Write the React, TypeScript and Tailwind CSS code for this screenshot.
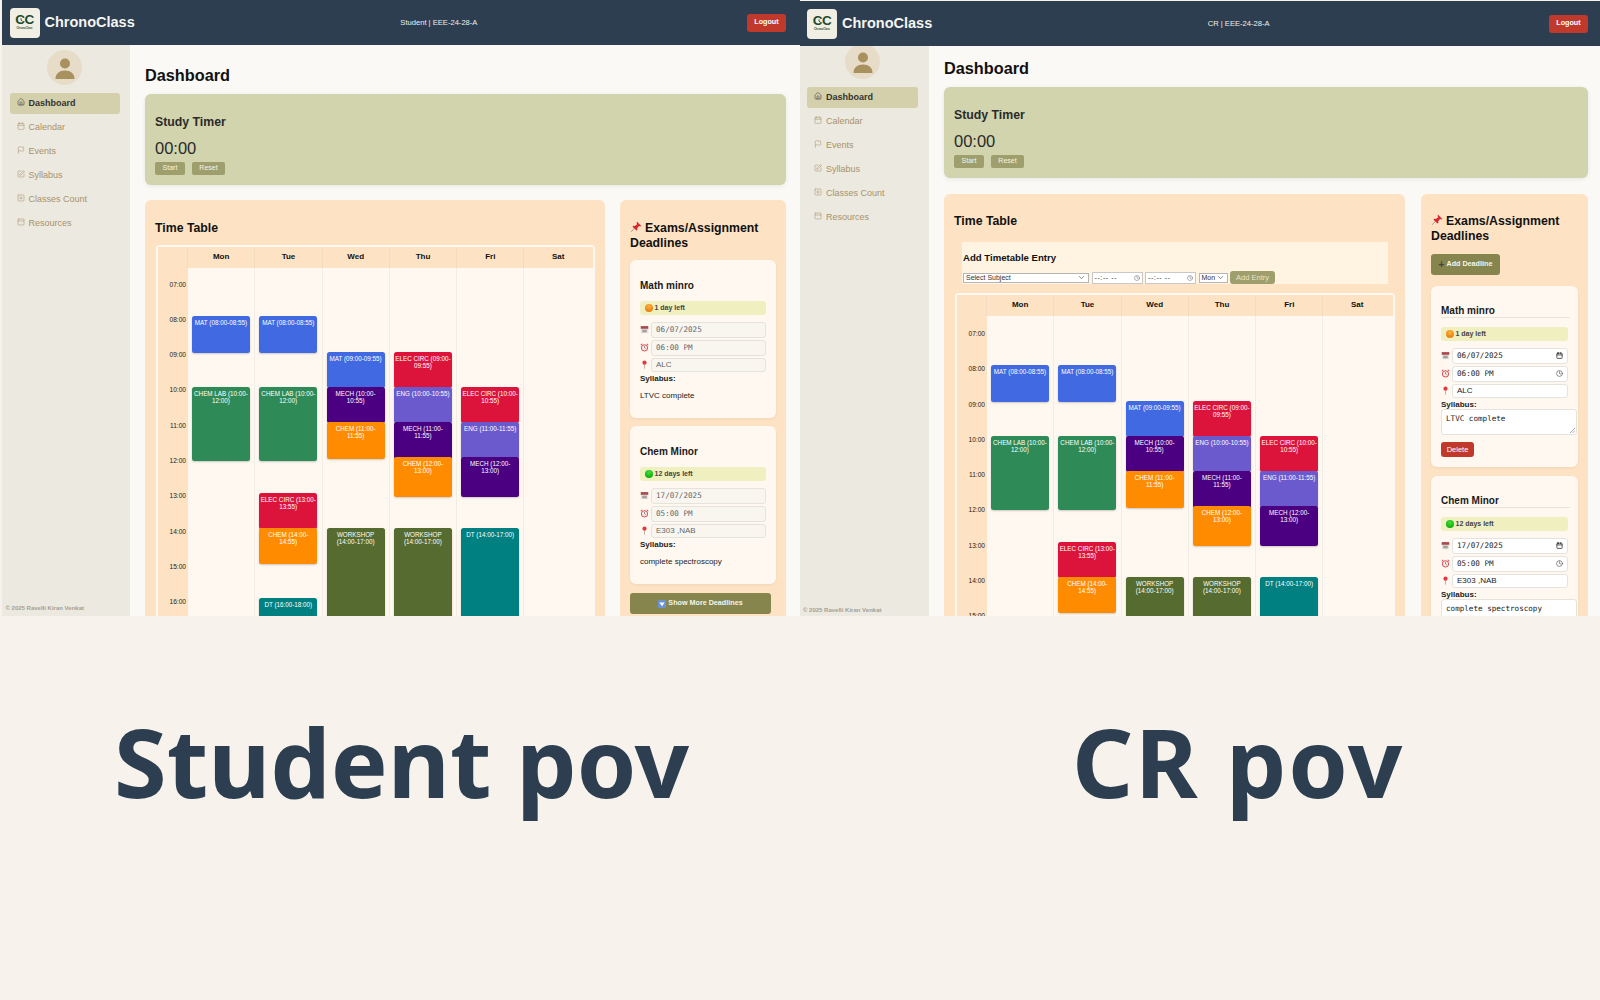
import React from "react";
import { Calendar, ChevronDown, Clock, Flag, Home, PanelTop, SquarePen, SquarePlus } from "lucide-react";

const hourH = 35.25;
const hours = ["07:00", "08:00", "09:00", "10:00", "11:00", "12:00", "13:00", "14:00", "15:00", "16:00", "17:00", "18:00"];

type Ev = { label: string; start: number; h: number; color: string };

const blue = "bg-[#4169e1]";
const green = "bg-[#2e8b57]";
const red = "bg-[#dc143c]";
const purple = "bg-[#4b0082]";
const slate = "bg-[#6a5acd]";
const orange = "bg-[#ff8c00]";
const olive = "bg-[#556b2f]";
const teal = "bg-[#008080]";

const days: { name: string; events: Ev[] }[] = [
  {
    name: "Mon",
    events: [
      { label: "MAT (08:00-08:55)", start: 8, h: 36.5, color: blue },
      { label: "CHEM LAB (10:00-12:00)", start: 10, h: 74.5, color: green },
    ],
  },
  {
    name: "Tue",
    events: [
      { label: "MAT (08:00-08:55)", start: 8, h: 36.5, color: blue },
      { label: "CHEM LAB (10:00-12:00)", start: 10, h: 74.5, color: green },
      { label: "ELEC CIRC (13:00-13:55)", start: 13, h: 36.5, color: red },
      { label: "CHEM (14:00-14:55)", start: 14, h: 36.5, color: orange },
      { label: "DT (16:00-18:00)", start: 16, h: 74.5, color: teal },
    ],
  },
  {
    name: "Wed",
    events: [
      { label: "MAT (09:00-09:55)", start: 9, h: 36.5, color: blue },
      { label: "MECH (10:00-10:55)", start: 10, h: 36.5, color: purple },
      { label: "CHEM (11:00-11:55)", start: 11, h: 36.5, color: orange },
      { label: "WORKSHOP (14:00-17:00)", start: 14, h: 110, color: olive },
    ],
  },
  {
    name: "Thu",
    events: [
      { label: "ELEC CIRC (09:00-09:55)", start: 9, h: 36.5, color: red },
      { label: "ENG (10:00-10:55)", start: 10, h: 36.5, color: slate },
      { label: "MECH (11:00-11:55)", start: 11, h: 36.5, color: purple },
      { label: "CHEM (12:00-13:00)", start: 12, h: 39.5, color: orange },
      { label: "WORKSHOP (14:00-17:00)", start: 14, h: 110, color: olive },
    ],
  },
  {
    name: "Fri",
    events: [
      { label: "ELEC CIRC (10:00-10:55)", start: 10, h: 36.5, color: red },
      { label: "ENG (11:00-11:55)", start: 11, h: 36.5, color: slate },
      { label: "MECH (12:00-13:00)", start: 12, h: 39.5, color: purple },
      { label: "DT (14:00-17:00)", start: 14, h: 110, color: teal },
    ],
  },
  { name: "Sat", events: [] },
];

const nav = [
  { label: "Dashboard", icon: Home },
  { label: "Calendar", icon: Calendar },
  { label: "Events", icon: Flag },
  { label: "Syllabus", icon: SquarePen },
  { label: "Classes Count", icon: SquarePlus },
  { label: "Resources", icon: PanelTop },
];

const deadlines = [
  { title: "Math minro", left: "1 day left", soon: true, date: "06/07/2025", time: "06:00 PM", place: "ALC", syllabus: "LTVC complete" },
  { title: "Chem Minor", left: "12 days left", soon: false, date: "17/07/2025", time: "05:00 PM", place: "E303 ,NAB", syllabus: "complete spectroscopy" },
];

const Logo = () => (
  <div className="relative flex h-[30px] w-[30px] shrink-0 flex-col items-center rounded-[4px] bg-[#f1eee3] pt-[6px]">
    <span className="text-[13.5px] leading-[12px] font-bold tracking-[-0.5px] text-[#1f4a2c]">CC</span>
    <span className="mt-[1px] text-[2.6px] leading-[3px] font-bold text-[#1f4a2c]">ChronoClass</span>
    <svg viewBox="0 0 10 10" className="absolute top-[9px] left-[8.5px] h-[6px] w-[6px]" fill="none" stroke="#1f4a2c" strokeWidth="1.4">
      <path d="M5 2v3.4l2.4 1.2" />
    </svg>
  </div>
);

const PinEmoji = () => (
  <svg viewBox="0 0 16 16" className="mr-[3px] inline-block h-[12px] w-[12px] align-[-1px]">
    <path d="M1.5 14.5 6 9.5" stroke="#9b9b9b" strokeWidth="1.2" />
    <path d="M9.5 1 15 6.5 13.6 7.4 12 6.6 9.6 9.8 9.8 12 8.6 12.8 3.4 7.6 4.2 6.4 6.4 6.6 9.6 4.2 8.7 2.3Z" fill="#d9252f" />
  </svg>
);

const CalendarEmoji = () => (
  <svg viewBox="0 0 12 12" className="h-[9px] w-[9px] shrink-0">
    <rect x="1" y="1.5" width="10" height="9.5" fill="#e6e2dc" />
    <rect x="1" y="1.5" width="10" height="3.5" fill="#a9474c" />
    <path d="M3 7h6M3 9h6" stroke="#6d6d6d" strokeWidth="1" />
  </svg>
);

const AlarmEmoji = () => (
  <svg viewBox="0 0 12 12" className="h-[9px] w-[9px] shrink-0" fill="none">
    <circle cx="6" cy="6.5" r="4.2" fill="#f9ece8" stroke="#d6454a" strokeWidth="1.3" />
    <path d="M1 3 3 1M11 3 9 1" stroke="#d6454a" strokeWidth="1.4" />
    <path d="M6 4v2.6l1.6.8" stroke="#555" strokeWidth=".8" />
  </svg>
);

const PlaceEmoji = () => (
  <svg viewBox="0 0 12 12" className="h-[9px] w-[9px] shrink-0">
    <path d="M6 6.5v5" stroke="#b9a79d" strokeWidth="1.2" />
    <circle cx="6" cy="3.6" r="2.8" fill="#e0383e" />
  </svg>
);

const Field = ({ icon, text, mono, h, cr, trail }: { icon: React.ReactNode; text: string; mono?: boolean; h: string; cr: boolean; trail?: React.ReactNode }) => (
  <div className="flex items-center">
    <div className="flex w-[11px] shrink-0 justify-start">{icon}</div>
    <div
      className={`flex flex-1 items-center justify-between rounded-[3px] border border-[#e6e3dc] pr-[4px] pl-[4px] ${h} ${
        cr ? "bg-white text-[#222]" : "bg-[#f9f6f0] text-[#666]"
      } ${mono ? "font-['DejaVu_Sans_Mono',monospace] text-[7.6px]" : "text-[8px]"}`}
    >
      <span>{text}</span>
      {trail}
    </div>
  </div>
);

const DeadlineCard = ({ d, cr }: { d: (typeof deadlines)[number]; cr: boolean }) => (
  <div className={`rounded-[6px] bg-[#fff8f1] pl-[10px] shadow-[0_1px_3px_rgba(0,0,0,0.06)] ${cr ? "pt-[19px] pr-[1px] pb-[10px]" : "pt-[20px] pr-[10px] pb-[18px]"}`}>
    <h4 className={`text-[10px] leading-[12px] font-bold text-[#1a1a1a] ${cr ? "mr-[7px] border-b border-[#e8e4dc]" : ""}`}>{d.title}</h4>
    <div className={`mt-[9px] flex h-[14px] items-center gap-[2px] rounded-[3px] bg-[#f0efc0] pl-[5px] text-[7px] font-bold text-[#444] ${cr ? "mr-[9px]" : ""}`}>
      <span
        className={`h-[7.5px] w-[7.5px] rounded-full ${
          d.soon ? "bg-[radial-gradient(circle_at_50%_30%,#ffb13d,#e06f00)]" : "bg-[radial-gradient(circle_at_50%_30%,#3fe03a,#009a00)]"
        }`}
      />
      {d.left}
    </div>
    <div className={`mt-[7px] flex flex-col gap-[2px] ${cr ? "mr-[9px]" : ""}`}>
      <Field icon={<CalendarEmoji />} text={d.date} mono h="h-[15.5px]" cr={cr} trail={cr ? <Calendar size={7} color="#222" strokeWidth={2.5} /> : undefined} />
      <Field icon={<AlarmEmoji />} text={d.time} mono h="h-[16px]" cr={cr} trail={cr ? <Clock size={7} color="#444" strokeWidth={2} /> : undefined} />
      <Field icon={<PlaceEmoji />} text={d.place} h="h-[14.5px]" cr={cr} />
    </div>
    <div className="mt-[2px] text-[8px] leading-[9px] font-bold text-[#222]">Syllabus:</div>
    {cr ? (
      <>
        <div className="relative h-[26px] rounded-[3px] border border-[#e6e3dc] bg-white pt-[4px] pl-[4px] font-['DejaVu_Sans_Mono',monospace] text-[7.6px] leading-[9px] text-[#222]">
          {d.syllabus}
          <svg viewBox="0 0 6 6" className="absolute right-[1px] bottom-[1px] h-[6px] w-[6px]" stroke="#888" strokeWidth=".7">
            <path d="M1 6 6 1M3.5 6 6 3.5" />
          </svg>
        </div>
        <button className="mt-[7px] flex h-[15px] w-[33px] items-center justify-center rounded-[3px] bg-[#c0392b] text-[7.5px] text-white">Delete</button>
      </>
    ) : (
      <p className="mt-[8px] text-[8px] leading-[9px] text-[#222]">{d.syllabus}</p>
    )}
  </div>
);

const Timetable = ({ cr }: { cr: boolean }) => (
  <div className="rounded-[4px] bg-[#fff8f1] p-[2px]">
    <div className="grid h-[21px] grid-cols-[30px_repeat(6,67.3px)] bg-[#fde3c3]">
      <div className="border-r border-[#f0dcc4]" />
      {days.map((d) => (
        <div key={d.name} className="flex items-center justify-center border-r border-[#f2dcc0] pb-[1px] text-[8px] font-bold text-[#111] last:border-r-0">
          {d.name}
        </div>
      ))}
    </div>
    <div className="grid h-[420px] grid-cols-[30px_repeat(6,67.3px)]">
      <div className={`bg-[#fde3c3] pr-[2px] text-right text-[6.6px] leading-[7px] text-[#222] ${cr ? "pt-[14px]" : "pt-[12.5px]"}`}>
        {hours.map((t) => (
          <div key={t} className="h-[35.3px]">
            {t}
          </div>
        ))}
      </div>
      {days.map((d) => (
        <div key={d.name} className="relative border-r border-[#f1ece4] last:border-r-0">
          {d.events.map((e) => (
            <div
              key={e.label}
              className={`absolute left-[4px] w-[58px] rounded-[2.5px] px-[1px] pt-[3px] text-center text-[6.3px] leading-[7px] text-white shadow-[0_1px_2px_rgba(0,0,0,0.2)] ${e.color}`}
              style={{ top: (cr ? 14 : 13) + (e.start - 7) * hourH, height: e.h }}
            >
              {e.label}
            </div>
          ))}
        </div>
      ))}
    </div>
  </div>
);

const AddEntry = () => (
  <div className="mx-[7px] mb-[9px] h-[42px] bg-[#fff3e2] pt-[10px] pl-[1px]">
    <h4 className="text-[9.6px] leading-[11px] font-bold text-[#111]">Add Timetable Entry</h4>
    <div className="mt-[8px] flex items-center gap-[2.5px] text-[7px] leading-[8px] text-[#333]">
      <div className="flex h-[10px] w-[126px] items-center justify-between border border-[#b5b5b5] bg-white px-[2px]">
        Select Subject
        <ChevronDown size={9} strokeWidth={1.5} />
      </div>
      {[0, 1].map((i) => (
        <div key={i} className="flex h-[12px] w-[51px] items-center justify-between border border-[#c8c8c8] bg-white px-[2px]">
          <span className="tracking-[0.6px]">--:-- --</span>
          <Clock size={6} strokeWidth={2} color="#666" />
        </div>
      ))}
      <div className="flex h-[10px] w-[29px] items-center justify-between border border-[#b5b5b5] bg-white px-[2px]">
        Mon
        <ChevronDown size={9} strokeWidth={1.5} />
      </div>
      <button className="flex h-[13px] w-[45px] items-center justify-center rounded-[3px] bg-[#9e9f6d] text-[7.5px] text-[#e4e4cc]">Add Entry</button>
    </div>
  </div>
);

const Dashboard = ({ cr }: { cr: boolean }) => (
  <div className={`flex h-[616px] shrink-0 flex-col overflow-hidden font-['Liberation_Sans',Arial,sans-serif] ${cr ? "w-[800px] pt-[1px]" : "w-[798px]"}`}>
    <header className={`relative z-10 flex h-[45px] shrink-0 items-center justify-between bg-[#2c3e50] text-white ${cr ? "pr-[12px] pl-[7px]" : "pr-[14px] pl-[7.5px]"}`}>
      <div className="flex items-center gap-[5px]">
        <Logo />
        <span className="text-[14.5px] font-bold text-[#f5f5f0]">ChronoClass</span>
      </div>
      <span className="-ml-[4px] text-[7.6px] text-[#eee]">{cr ? "CR | EEE-24-28-A" : "Student | EEE-24-28-A"}</span>
      <button className="flex h-[18px] w-[39px] items-center justify-center rounded-[3px] bg-[#c0392b] text-[7.2px] font-bold">Logout</button>
    </header>

    <div className="flex min-h-0 flex-1">
      {/* SIDEBAR */}
      <aside className={`flex shrink-0 flex-col bg-[#ece9e0] ${cr ? "w-[129px] pr-[11px] pl-[7px]" : "w-[128px] pr-[10.5px] pl-[7.5px]"}`}>
        <div className={`mx-auto flex h-[35px] w-[35px] shrink-0 items-center justify-center rounded-full bg-[#e6dcc8] ${cr ? "-mt-[2px]" : "mt-[5px]"}`}>
          <svg viewBox="0 0 24 24" className="h-[24px] w-[24px]" fill="#a8905f">
            <circle cx="12" cy="7.5" r="5" />
            <path d="M2.5 23c0-5.5 4-8.5 9.5-8.5s9.5 3 9.5 8.5z" />
          </svg>
        </div>
        <nav className="mt-[8.4px] flex flex-col gap-[3px]">
          {nav.map((n, i) => (
            <div
              key={n.label}
              className={`flex h-[21px] items-center gap-[4px] rounded-[3px] pl-[8px] text-[9px] ${
                i === 0 ? "bg-[#d4d0ac] font-bold text-[#333]" : "text-[#a8926a]"
              }`}
            >
              <n.icon size={8} strokeWidth={1.6} className="-mt-[3px] -ml-[1px] shrink-0" />
              {n.label}
            </div>
          ))}
        </nav>
        <div className={`mt-auto -ml-[4px] text-[6px] font-bold text-[#a5a094] ${cr ? "pb-[1px]" : "pb-[3px]"}`}>© 2025 Ravelli Kiran Venkat</div>
      </aside>

      {/* MAIN */}
      <main className={`min-w-0 flex-1 overflow-hidden bg-[#fbf9f5] pl-[15px] ${cr ? "pt-[13px] pr-[12px]" : "pt-[21px] pr-[14px]"}`}>
        <h1 className="text-[16.3px] leading-[19px] font-bold text-[#111]">Dashboard</h1>
        <section className="mt-[9px] h-[91px] rounded-[6px] bg-[#d1d4ad] pt-[21px] pl-[10px] shadow-[0_1px_4px_rgba(0,0,0,0.08)]">
          <h3 className="text-[12.3px] leading-[15px] font-bold text-[#2a2a2a]">Study Timer</h3>
          <div className="mt-[8px] text-[16.5px] leading-[20px] text-[#2a2a2a]">00:00</div>
          <div className="mt-[4px] flex gap-[7px]">
            <button className="h-[13px] w-[30px] rounded-[2px] bg-[#9e9f6d] text-[7px] text-[#f4f4e8]">Start</button>
            <button className="h-[13px] w-[33px] rounded-[2px] bg-[#9e9f6d] text-[7px] text-[#f4f4e8]">Reset</button>
          </div>
        </section>

        <div className={`flex items-start ${cr ? "mt-[16px] gap-[16px]" : "mt-[15px] gap-[15px]"}`}>
          {/* TIMETABLE */}
          <section className={`h-[500px] shrink-0 rounded-[6px] bg-[#fde3c3] pr-[10px] pl-[11px] ${cr ? "w-[461px]" : "w-[460px]"}`}>
            <h3 className={`-ml-[1px] text-[12.3px] leading-[15px] font-bold text-[#111] ${cr ? "mb-[13px] pt-[20px]" : "mb-[9px] pt-[21px]"}`}>Time Table</h3>
            {cr && <AddEntry />}
            <Timetable cr={cr} />
          </section>

          {/* DEADLINES */}
          <section className={`h-[500px] min-w-0 flex-1 rounded-[6px] bg-[#fde3c3] px-[10px] ${cr ? "pt-[20px]" : "pt-[21px]"}`}>
            <h3 className="text-[12.3px] leading-[15px] font-bold text-[#111]">
              <PinEmoji />
              Exams/Assignment Deadlines
            </h3>
            {cr && (
              <button className="mt-[10px] flex h-[21px] w-[69px] items-center justify-center gap-[2px] rounded-[3px] bg-[#87854e] text-[7.2px] font-bold text-[#f5f5e8]">
                <span className="text-[10px] leading-none text-[#444]">+</span> Add Deadline
              </button>
            )}
            <div className={`flex flex-col ${cr ? "mt-[11px] gap-[9px]" : "mt-[9px] gap-[8px]"}`}>
              {deadlines.map((d) => (
                <DeadlineCard key={d.title} d={d} cr={cr} />
              ))}
              {!cr && (
                <button className="mt-[1px] mr-[5px] flex h-[21px] items-center justify-center gap-[2px] rounded-[3px] bg-[#87854e] text-[7.2px] font-bold text-[#f5f5e8]">
                  <span className="flex h-[8px] w-[8px] items-center justify-center rounded-[1px] bg-[#6b93d6]">
                    <svg viewBox="0 0 8 8" className="h-[6px] w-[6px]" fill="#fff">
                      <path d="M0.5 2h7L4 7z" />
                    </svg>
                  </span>
                  Show More Deadlines
                </button>
              )}
            </div>
          </section>
        </div>
      </main>
    </div>
  </div>
);

export default function App() {
  return (
    <div className="h-[1000px] w-[1600px] overflow-hidden bg-[#f7f3ec]">
      <div className="flex pl-[2px]">
        <Dashboard cr={false} />
        <Dashboard cr />
      </div>
      <div className="flex pt-[80px] font-['Noto_Sans',sans-serif] text-[95.6px] leading-[130px] font-bold text-[#2c3e50]">
        <div className="w-[1072px] pl-[114px]">Student pov</div>
        <div className="tracking-[1.7px]">CR pov</div>
      </div>
    </div>
  );
}
